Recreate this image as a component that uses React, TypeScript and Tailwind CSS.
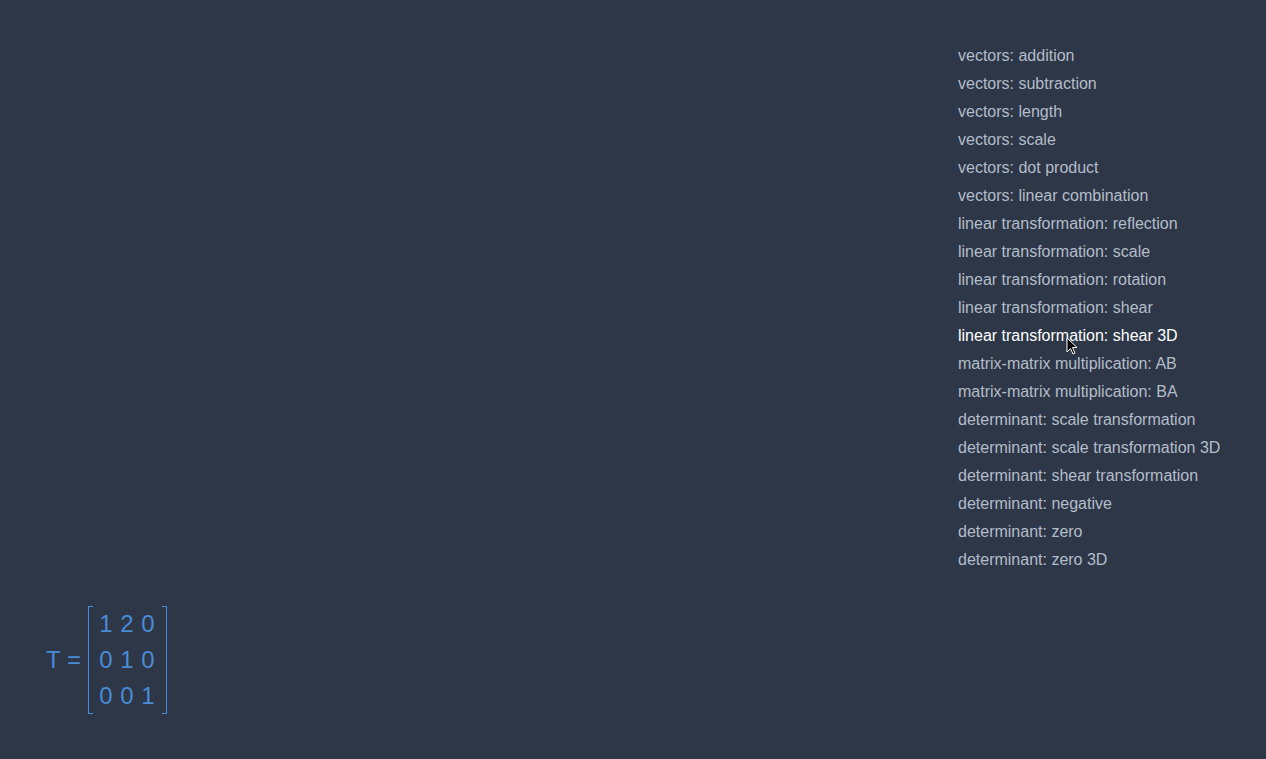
const topics = [
  "vectors: addition",
  "vectors: subtraction",
  "vectors: length",
  "vectors: scale",
  "vectors: dot product",
  "vectors: linear combination",
  "linear transformation: reflection",
  "linear transformation: scale",
  "linear transformation: rotation",
  "linear transformation: shear",
  "linear transformation: shear 3D",
  "matrix-matrix multiplication: AB",
  "matrix-matrix multiplication: BA",
  "determinant: scale transformation",
  "determinant: scale transformation 3D",
  "determinant: shear transformation",
  "determinant: negative",
  "determinant: zero",
  "determinant: zero 3D",
];

const active = "linear transformation: shear 3D";

const matrix = [
  [1, 2, 0],
  [0, 1, 0],
  [0, 0, 1],
];

const Bracket = ({ side }: { side: "l" | "r" }) => (
  <div
    className={
      side === "l"
        ? "w-[5px] self-stretch border-y border-l border-[#4a8bd6]"
        : "w-[5px] self-stretch border-y border-r border-[#4a8bd6]"
    }
  />
);

export default function App() {
  return (
    <div className="relative h-[759px] w-full overflow-hidden bg-[#2d3748] font-['Liberation_Sans',Arial,sans-serif]">
      <ul className="absolute left-[958px] top-[42px] flex flex-col">
        {topics.map((t) => (
          <li
            key={t}
            className={
              t === active
                ? "h-[28px] text-[16px] leading-[28px] text-white cursor-pointer"
                : "h-[28px] text-[16px] leading-[28px] text-[#b4bdc9] cursor-pointer hover:text-white"
            }
          >
            {t}
          </li>
        ))}
      </ul>

      <div className="absolute left-[46px] top-[606px] flex items-center text-[#4a8bd6]">
        <span className="mr-[7px] text-[24px]">T =</span>
        <div className="flex h-[108px] items-stretch">
          <Bracket side="l" />
          <div className="flex flex-col justify-center pl-[6px] pr-[7px]">
            {matrix.map((row, i) => (
              <div key={i} className="flex h-[36px] items-center gap-[7px] text-[24px]">
                {row.map((v, j) => (
                  <span key={j} className="w-[14px] text-center">
                    {v}
                  </span>
                ))}
              </div>
            ))}
          </div>
          <Bracket side="r" />
        </div>
      </div>

      <svg
        className="absolute left-[1066px] top-[337px]"
        width="12"
        height="19"
        viewBox="0 0 12 19"
      >
        <path d="M1 1 L1 15 L4.5 11.5 L7 17 L9 16 L6.5 10.5 L11 10.5 Z" fill="#000" stroke="#fff" strokeWidth="1" />
      </svg>
    </div>
  );
}
